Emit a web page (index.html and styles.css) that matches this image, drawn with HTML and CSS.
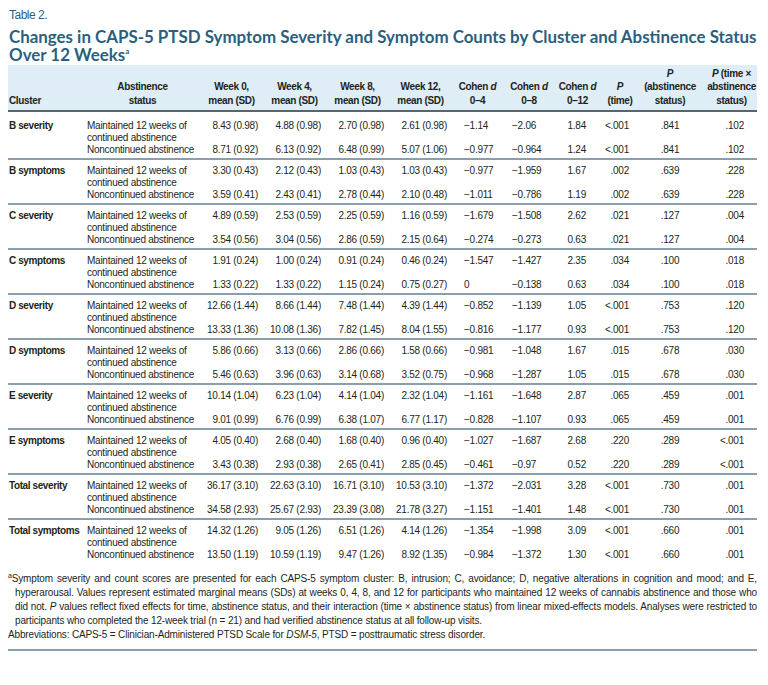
FILE: index.html
```html
<!DOCTYPE html>
<html lang="en">
<head>
<meta charset="utf-8">
<title>Table 2</title>
<link rel="stylesheet" href="styles.css">
</head>
<body>
<div class="label">Table 2.</div>
<h1 class="title">Changes in CAPS-5 PTSD Symptom Severity and Symptom Counts by Cluster and Abstinence Status<br>Over 12 Weeks<sup>a</sup></h1>
<table class="data">
  <colgroup>
    <col class="w-cl"><col class="w-st"><col class="w-wk"><col class="w-wk"><col class="w-wk"><col class="w-wk12">
    <col class="w-c4"><col class="w-c8"><col class="w-c12"><col class="w-pt"><col class="w-pa"><col class="w-px">
  </colgroup>
  <thead>
    <tr>
      <th class="h-left">Cluster</th>
      <th>Abstinence<br>status</th>
      <th>Week 0,<br>mean (SD)</th>
      <th>Week 4,<br>mean (SD)</th>
      <th>Week 8,<br>mean (SD)</th>
      <th>Week 12,<br>mean (SD)</th>
      <th>Cohen <i>d</i><br>0–4</th>
      <th>Cohen <i>d</i><br>0–8</th>
      <th>Cohen <i>d</i><br>0–12</th>
      <th><i>P</i><br>(time)</th>
      <th><i>P</i><br>(abstinence<br>status)</th>
      <th class="h-px"><i>P</i> (time ×<br>abstinence<br>status)</th>
    </tr>
  </thead>
  <tbody>
    <tr class="r1"><td class="cl">B severity</td><td class="st">Maintained 12 weeks of continued abstinence</td><td class="wk">8.43 (0.98)</td><td class="wk">4.88 (0.98)</td><td class="wk">2.70 (0.98)</td><td class="wk">2.61 (0.98)</td><td class="c4">−1.14</td><td class="c8">−2.06</td><td class="c12">1.84</td><td class="pt">&lt;.001</td><td class="pa">.841</td><td class="px">.102</td></tr>
    <tr class="r2"><td class="cl"></td><td class="st">Noncontinued abstinence</td><td class="wk">8.71 (0.92)</td><td class="wk">6.13 (0.92)</td><td class="wk">6.48 (0.99)</td><td class="wk">5.07 (1.06)</td><td class="c4">−0.977</td><td class="c8">−0.964</td><td class="c12">1.24</td><td class="pt">&lt;.001</td><td class="pa">.841</td><td class="px">.102</td></tr>
  </tbody>
  <tbody>
    <tr class="r1"><td class="cl">B symptoms</td><td class="st">Maintained 12 weeks of continued abstinence</td><td class="wk">3.30 (0.43)</td><td class="wk">2.12 (0.43)</td><td class="wk">1.03 (0.43)</td><td class="wk">1.03 (0.43)</td><td class="c4">−0.977</td><td class="c8">−1.959</td><td class="c12">1.67</td><td class="pt">.002</td><td class="pa">.639</td><td class="px">.228</td></tr>
    <tr class="r2"><td class="cl"></td><td class="st">Noncontinued abstinence</td><td class="wk">3.59 (0.41)</td><td class="wk">2.43 (0.41)</td><td class="wk">2.78 (0.44)</td><td class="wk">2.10 (0.48)</td><td class="c4">−1.011</td><td class="c8">−0.786</td><td class="c12">1.19</td><td class="pt">.002</td><td class="pa">.639</td><td class="px">.228</td></tr>
  </tbody>
  <tbody>
    <tr class="r1"><td class="cl">C severity</td><td class="st">Maintained 12 weeks of continued abstinence</td><td class="wk">4.89 (0.59)</td><td class="wk">2.53 (0.59)</td><td class="wk">2.25 (0.59)</td><td class="wk">1.16 (0.59)</td><td class="c4">−1.679</td><td class="c8">−1.508</td><td class="c12">2.62</td><td class="pt">.021</td><td class="pa">.127</td><td class="px">.004</td></tr>
    <tr class="r2"><td class="cl"></td><td class="st">Noncontinued abstinence</td><td class="wk">3.54 (0.56)</td><td class="wk">3.04 (0.56)</td><td class="wk">2.86 (0.59)</td><td class="wk">2.15 (0.64)</td><td class="c4">−0.274</td><td class="c8">−0.273</td><td class="c12">0.63</td><td class="pt">.021</td><td class="pa">.127</td><td class="px">.004</td></tr>
  </tbody>
  <tbody>
    <tr class="r1"><td class="cl">C symptoms</td><td class="st">Maintained 12 weeks of continued abstinence</td><td class="wk">1.91 (0.24)</td><td class="wk">1.00 (0.24)</td><td class="wk">0.91 (0.24)</td><td class="wk">0.46 (0.24)</td><td class="c4">−1.547</td><td class="c8">−1.427</td><td class="c12">2.35</td><td class="pt">.034</td><td class="pa">.100</td><td class="px">.018</td></tr>
    <tr class="r2"><td class="cl"></td><td class="st">Noncontinued abstinence</td><td class="wk">1.33 (0.22)</td><td class="wk">1.33 (0.22)</td><td class="wk">1.15 (0.24)</td><td class="wk">0.75 (0.27)</td><td class="c4">0</td><td class="c8">−0.138</td><td class="c12">0.63</td><td class="pt">.034</td><td class="pa">.100</td><td class="px">.018</td></tr>
  </tbody>
  <tbody>
    <tr class="r1"><td class="cl">D severity</td><td class="st">Maintained 12 weeks of continued abstinence</td><td class="wk">12.66 (1.44)</td><td class="wk">8.66 (1.44)</td><td class="wk">7.48 (1.44)</td><td class="wk">4.39 (1.44)</td><td class="c4">−0.852</td><td class="c8">−1.139</td><td class="c12">1.05</td><td class="pt">&lt;.001</td><td class="pa">.753</td><td class="px">.120</td></tr>
    <tr class="r2"><td class="cl"></td><td class="st">Noncontinued abstinence</td><td class="wk">13.33 (1.36)</td><td class="wk">10.08 (1.36)</td><td class="wk">7.82 (1.45)</td><td class="wk">8.04 (1.55)</td><td class="c4">−0.816</td><td class="c8">−1.177</td><td class="c12">0.93</td><td class="pt">&lt;.001</td><td class="pa">.753</td><td class="px">.120</td></tr>
  </tbody>
  <tbody>
    <tr class="r1"><td class="cl">D symptoms</td><td class="st">Maintained 12 weeks of continued abstinence</td><td class="wk">5.86 (0.66)</td><td class="wk">3.13 (0.66)</td><td class="wk">2.86 (0.66)</td><td class="wk">1.58 (0.66)</td><td class="c4">−0.981</td><td class="c8">−1.048</td><td class="c12">1.67</td><td class="pt">.015</td><td class="pa">.678</td><td class="px">.030</td></tr>
    <tr class="r2"><td class="cl"></td><td class="st">Noncontinued abstinence</td><td class="wk">5.46 (0.63)</td><td class="wk">3.96 (0.63)</td><td class="wk">3.14 (0.68)</td><td class="wk">3.52 (0.75)</td><td class="c4">−0.968</td><td class="c8">−1.287</td><td class="c12">1.05</td><td class="pt">.015</td><td class="pa">.678</td><td class="px">.030</td></tr>
  </tbody>
  <tbody>
    <tr class="r1"><td class="cl">E severity</td><td class="st">Maintained 12 weeks of continued abstinence</td><td class="wk">10.14 (1.04)</td><td class="wk">6.23 (1.04)</td><td class="wk">4.14 (1.04)</td><td class="wk">2.32 (1.04)</td><td class="c4">−1.161</td><td class="c8">−1.648</td><td class="c12">2.87</td><td class="pt">.065</td><td class="pa">.459</td><td class="px">.001</td></tr>
    <tr class="r2"><td class="cl"></td><td class="st">Noncontinued abstinence</td><td class="wk">9.01 (0.99)</td><td class="wk">6.76 (0.99)</td><td class="wk">6.38 (1.07)</td><td class="wk">6.77 (1.17)</td><td class="c4">−0.828</td><td class="c8">−1.107</td><td class="c12">0.93</td><td class="pt">.065</td><td class="pa">.459</td><td class="px">.001</td></tr>
  </tbody>
  <tbody>
    <tr class="r1"><td class="cl">E symptoms</td><td class="st">Maintained 12 weeks of continued abstinence</td><td class="wk">4.05 (0.40)</td><td class="wk">2.68 (0.40)</td><td class="wk">1.68 (0.40)</td><td class="wk">0.96 (0.40)</td><td class="c4">−1.027</td><td class="c8">−1.687</td><td class="c12">2.68</td><td class="pt">.220</td><td class="pa">.289</td><td class="px">&lt;.001</td></tr>
    <tr class="r2"><td class="cl"></td><td class="st">Noncontinued abstinence</td><td class="wk">3.43 (0.38)</td><td class="wk">2.93 (0.38)</td><td class="wk">2.65 (0.41)</td><td class="wk">2.85 (0.45)</td><td class="c4">−0.461</td><td class="c8">−0.97</td><td class="c12">0.52</td><td class="pt">.220</td><td class="pa">.289</td><td class="px">&lt;.001</td></tr>
  </tbody>
  <tbody>
    <tr class="r1"><td class="cl">Total severity</td><td class="st">Maintained 12 weeks of continued abstinence</td><td class="wk">36.17 (3.10)</td><td class="wk">22.63 (3.10)</td><td class="wk">16.71 (3.10)</td><td class="wk">10.53 (3.10)</td><td class="c4">−1.372</td><td class="c8">−2.031</td><td class="c12">3.28</td><td class="pt">&lt;.001</td><td class="pa">.730</td><td class="px">.001</td></tr>
    <tr class="r2"><td class="cl"></td><td class="st">Noncontinued abstinence</td><td class="wk">34.58 (2.93)</td><td class="wk">25.67 (2.93)</td><td class="wk">23.39 (3.08)</td><td class="wk">21.78 (3.27)</td><td class="c4">−1.151</td><td class="c8">−1.401</td><td class="c12">1.48</td><td class="pt">&lt;.001</td><td class="pa">.730</td><td class="px">.001</td></tr>
  </tbody>
  <tbody>
    <tr class="r1"><td class="cl">Total symptoms</td><td class="st">Maintained 12 weeks of continued abstinence</td><td class="wk">14.32 (1.26)</td><td class="wk">9.05 (1.26)</td><td class="wk">6.51 (1.26)</td><td class="wk">4.14 (1.26)</td><td class="c4">−1.354</td><td class="c8">−1.998</td><td class="c12">3.09</td><td class="pt">&lt;.001</td><td class="pa">.660</td><td class="px">.001</td></tr>
    <tr class="r2"><td class="cl"></td><td class="st">Noncontinued abstinence</td><td class="wk">13.50 (1.19)</td><td class="wk">10.59 (1.19)</td><td class="wk">9.47 (1.26)</td><td class="wk">8.92 (1.35)</td><td class="c4">−0.984</td><td class="c8">−1.372</td><td class="c12">1.30</td><td class="pt">&lt;.001</td><td class="pa">.660</td><td class="px">.001</td></tr>
  </tbody>
</table>
<div class="notes">
  <p class="note-a"><sup>a</sup>Symptom severity and count scores are presented for each CAPS-5 symptom cluster: B, intrusion; C, avoidance; D, negative alterations in cognition and mood; and E, hyperarousal. Values represent estimated marginal means (SDs) at weeks 0, 4, 8, and 12 for participants who maintained 12 weeks of cannabis abstinence and those who did not. <i>P</i> values reflect fixed effects for time, abstinence status, and their interaction (time × abstinence status) from linear mixed-effects models. Analyses were restricted to participants who completed the 12-week trial (n = 21) and had verified abstinence status at all follow-up visits.</p>
  <p class="note-abbr">Abbreviations: CAPS-5 = Clinician-Administered PTSD Scale for <i>DSM-5</i>, PTSD = posttraumatic stress disorder.</p>
</div>
</body>
</html>
```

FILE: styles.css
```css
html, body {
  margin: 0;
  padding: 0;
  background: #ffffff;
}

body {
  padding: 7px 11px 0 8px;
  font-family: "Liberation Sans", Arial, sans-serif;
  color: #231f20;
}

.label {
  font-size: 12px;
  letter-spacing: -0.5px;
  line-height: 16px;
  color: #2b5f7f;
  padding-left: 1px;
}

.title {
  margin: 5px 0 1px 0;
  padding-left: 1px;
  font-family: Lato, "Liberation Sans", Arial, sans-serif;
  font-weight: 700;
  font-size: 16.9px;
  line-height: 18px;
  color: #2b5f7f;
  white-space: nowrap;
}

.title sup {
  font-size: 8px;
  vertical-align: 7px;
  line-height: 0;
}

.data {
  width: 749px;
  table-layout: fixed;
  border-collapse: collapse;
  font-size: 10px;
  letter-spacing: -0.25px;
}

.w-cl { width: 77px; }
.w-st { width: 115px; }
.w-wk { width: 63px; }
.w-wk12 { width: 63px; }
.w-c4 { width: 51px; }
.w-c8 { width: 52px; }
.w-c12 { width: 45px; }
.w-pt { width: 40px; }
.w-pa { width: 60px; }
.w-px { width: 57px; }

.data thead tr {
  background: #deedf6;
}

.data th {
  height: 46px;
  padding: 0 0 3px 0;
  box-sizing: border-box;
  vertical-align: bottom;
  text-align: center;
  font-weight: 700;
  font-size: 10px;
  letter-spacing: -0.35px;
  line-height: 13.5px;
  white-space: nowrap;
  color: #231f20;
  border-bottom: 2px solid #5b656c;
}

.data th.h-left {
  text-align: left;
  padding-left: 1px;
}

.data th.h-px {
  padding-left: 6px;
}

.data td {
  vertical-align: top;
  line-height: 12px;
  padding: 0;
  white-space: nowrap;
}

.data tr.r1 td {
  padding-top: 8px;
}

.data tr.r2 td {
  padding-bottom: 2px;
}

.data tbody + tbody tr.r1 td {
  border-top: 2px solid #8a9fae;
  padding-top: 5px;
}

.data td.cl {
  font-weight: 700;
  letter-spacing: -0.4px;
  padding-left: 1px;
}

.data tr.r1 td.st {
  white-space: normal;
}

.data td.st {
  padding-left: 2px;
  padding-right: 10px;
}

.data td.wk {
  text-align: right;
  padding-right: 5px;
}

.data td.c4 {
  text-align: left;
  padding-left: 12px;
}

.data td.c8 {
  text-align: left;
  padding-left: 9px;
}

.data td.c12 {
  text-align: right;
  padding-right: 14px;
}

.data td.pt {
  text-align: right;
  padding-right: 11px;
}

.data td.pa {
  text-align: center;
}

.data td.px {
  text-align: right;
  padding-right: 13px;
}

.notes {
  width: 749px;
  margin-top: 9px;
  padding-bottom: 7px;
  border-bottom: 2px solid #8a9fae;
  font-size: 10px;
  letter-spacing: -0.15px;
  line-height: 14px;
}

.notes p {
  margin: 0;
}

.note-a {
  text-align: justify;
  padding-left: 7px;
  text-indent: -7px;
}

.note-a sup {
  font-size: 7px;
  line-height: 0;
  vertical-align: 4px;
}
```
